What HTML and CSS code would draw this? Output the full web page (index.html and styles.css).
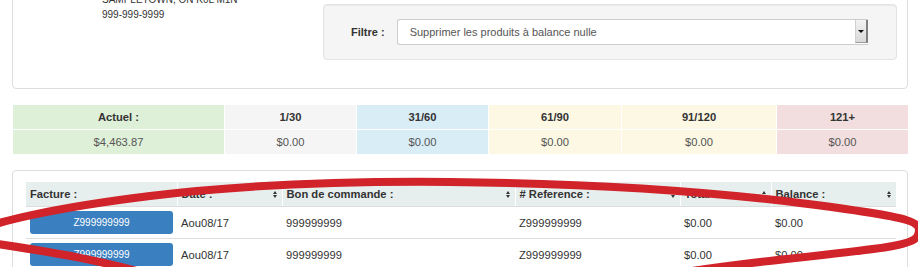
FILE: index.html
```html
<!DOCTYPE html>
<html lang="fr">
<head>
    <meta charset="UTF-8">
    <meta name="viewport" content="width=device-width, initial-scale=1.0">
    <title>État de compte</title>
    <link rel="stylesheet" href="styles.css">
</head>
<body>
    <div class="panel info-panel">
        <div class="address">
            <div>ENTREPRISE SAMPLE INC.</div>
            <div>123 RUE PRINCIPALE</div>
            <div>SAMPLETOWN, ON K0L M1N</div>
            <div>999-999-9999</div>
        </div>
        <div class="well">
            <label class="filter-label">Filtre :</label>
            <div class="select">
                <span class="select-text">Supprimer les produits à balance nulle</span>
                <span class="select-btn"><span class="select-arrow"></span></span>
            </div>
        </div>
    </div>

    <div class="aging">
        <div class="cell head current">Actuel :</div>
        <div class="cell head neutral">1/30</div>
        <div class="cell head info">31/60</div>
        <div class="cell head warning">61/90</div>
        <div class="cell head warning">91/120</div>
        <div class="cell head danger">121+</div>
        <div class="cell current">$4,463.87</div>
        <div class="cell neutral">$0.00</div>
        <div class="cell info">$0.00</div>
        <div class="cell warning">$0.00</div>
        <div class="cell warning">$0.00</div>
        <div class="cell danger">$0.00</div>
    </div>

    <div class="panel invoice-panel">
        <table class="invoices">
            <colgroup>
                <col style="width: 151px">
                <col style="width: 105px">
                <col style="width: 233px">
                <col style="width: 165px">
                <col style="width: 91px">
                <col style="width: 125px">
            </colgroup>
            <thead>
                <tr>
                    <th><div class="th-inner">Facture :</div></th>
                    <th><div class="th-inner">Date : <span class="sort"></span></div></th>
                    <th><div class="th-inner">Bon de commande : <span class="sort"></span></div></th>
                    <th><div class="th-inner"># Reference : <span class="sort"></span></div></th>
                    <th><div class="th-inner">Total : <span class="sort"></span></div></th>
                    <th><div class="th-inner">Balance : <span class="sort"></span></div></th>
                </tr>
            </thead>
            <tbody>
                <tr>
                    <td><a class="btn-invoice">Z999999999</a></td>
                    <td>Aou08/17</td>
                    <td>999999999</td>
                    <td>Z999999999</td>
                    <td>$0.00</td>
                    <td>$0.00</td>
                </tr>
                <tr>
                    <td><a class="btn-invoice">Z999999999</a></td>
                    <td>Aou08/17</td>
                    <td>999999999</td>
                    <td>Z999999999</td>
                    <td>$0.00</td>
                    <td>$0.00</td>
                </tr>
            </tbody>
        </table>
    </div>

    <!-- hand-drawn annotation -->
    <svg class="scribble" width="918" height="267" viewBox="0 0 918 267">
        <path d="M -30 234 C -10 222, 60 207, 150 196 S 340 181, 450 182 S 680 188, 800 203 S 922 222, 918 235 S 860 250, 760 262 S 640 280, 600 290" />
        <path d="M 180 285 C 120 262, 40 250, -30 240" />
    </svg>
</body>
</html>
```

FILE: styles.css
```css
body {
    margin: 0;
    font-family: "Liberation Sans", Arial, sans-serif;
    font-size: 11.2px;
    color: #333;
    background-color: #fff;
    position: relative;
    overflow: hidden;
}

.panel {
    border: 1px solid #ddd;
    border-radius: 4px;
    background-color: #fff;
}

.info-panel {
    display: flex;
    align-items: flex-start;
    margin: -49px 10px 0 12px;
    padding: 10px 10px 28px 89px;
}

.address {
    flex: 1;
    font-size: 10px;
    line-height: 15px;
    color: #333;
}

.well {
    width: 574px;
    box-sizing: border-box;
    margin-top: 42px;
    padding: 14px 28px 14px 27px;
    display: flex;
    align-items: center;
    gap: 12px;
    background-color: #f5f5f5;
    border: 1px solid #e3e3e3;
    border-radius: 4px;
    box-shadow: inset 0 1px 1px rgba(0, 0, 0, 0.05);
}

.filter-label {
    font-weight: bold;
    font-size: 11px;
    color: #333;
}

.select {
    flex: 1;
    height: 26px;
    box-sizing: border-box;
    display: flex;
    align-items: stretch;
    background-color: #fff;
    border: 1px solid #ccc;
    border-right: none;
    border-radius: 3px 0 0 3px;
}

.select-text {
    flex: 1;
    padding-left: 12px;
    line-height: 24px;
    font-size: 11px;
    color: #555;
}

.select-btn {
    width: 10px;
    margin: 0 0 1px 0;
    display: flex;
    align-items: center;
    justify-content: center;
    background: linear-gradient(#f2f2f2, #d9d9d9);
    border-left: 1px solid #d0d0d0;
    border-right: 2px solid #808080;
    border-bottom: 1px solid #9a9a9a;
}

.select-arrow {
    width: 0;
    height: 0;
    border-left: 3px solid transparent;
    border-right: 3px solid transparent;
    border-top: 3px solid #111;
}

.aging {
    display: grid;
    grid-template-columns: 211px 131px 131px 132px 154px 131px;
    grid-auto-rows: 24px;
    gap: 1px;
    margin: 16px 10px 0 13px;
}

.cell {
    display: flex;
    align-items: center;
    justify-content: center;
    color: #555;
}

.cell.head {
    font-weight: bold;
    color: #333;
}

.current { background-color: #dff0d8; }
.neutral { background-color: #f5f5f5; }
.info { background-color: #d9edf7; }
.warning { background-color: #fcf8e3; }
.danger { background-color: #f2dede; }

.invoice-panel {
    margin: 16px 10px 0 12px;
    padding: 11px 11px 20px 13px;
}

.invoices {
    width: 870px;
    table-layout: fixed;
    border-collapse: collapse;
}

.invoices th {
    height: 24px;
    padding: 0 4px;
    background-color: #e7eeee;
    border-left: 1px solid #fff;
    border-bottom: 1px solid #ddd;
    text-align: left;
    font-weight: bold;
}

.invoices th:first-child {
    border-left: none;
}

.th-inner {
    display: flex;
    align-items: center;
    justify-content: space-between;
}

.sort {
    display: flex;
    flex-direction: column;
    gap: 1px;
    margin-right: 1px;
}

.sort::before,
.sort::after {
    content: "";
    width: 0;
    height: 0;
    border-left: 2.5px solid transparent;
    border-right: 2.5px solid transparent;
}

.sort::before {
    border-bottom: 3px solid #333;
}

.sort::after {
    border-top: 3px solid #333;
}

.invoices td {
    padding: 4px 4px;
    border-top: 1px solid #ddd;
    height: 23px;
    color: #333;
}

.invoices tbody tr:first-child td {
    border-top: none;
}

.btn-invoice {
    display: block;
    height: 23px;
    line-height: 23px;
    text-align: center;
    font-size: 10px;
    color: #fff;
    background-color: #3a7fbf;
    border-radius: 3px;
    box-sizing: border-box;
}

.scribble {
    position: absolute;
    top: 0;
    left: 0;
    pointer-events: none;
}

.scribble path {
    fill: none;
    stroke: #d1232a;
    stroke-width: 8;
    stroke-linecap: round;
}
```
